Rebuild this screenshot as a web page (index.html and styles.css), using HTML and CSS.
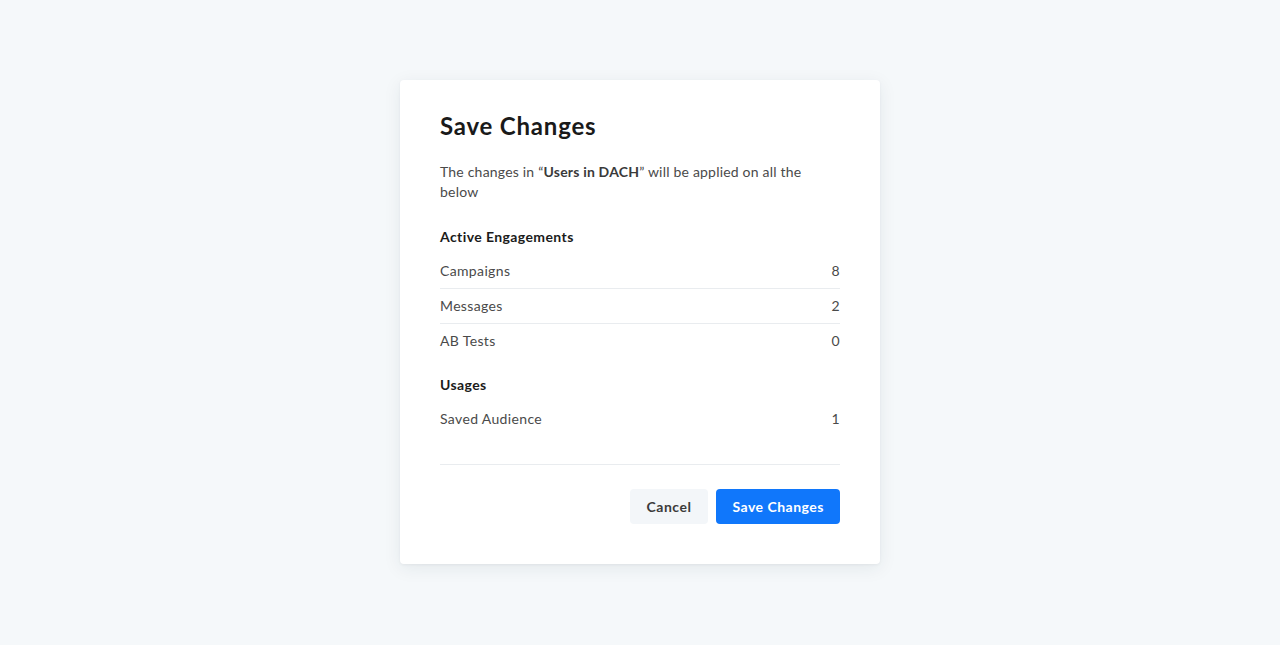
FILE: index.html
```html
<!DOCTYPE html>
<html lang="en">
<head>
<meta charset="utf-8">
<title>Save Changes</title>
<link rel="stylesheet" href="styles.css">
</head>
<body>
<div class="page">
  <div class="modal" role="dialog" aria-labelledby="modal-title">
    <h1 class="modal-title" id="modal-title">Save Changes</h1>
    <p class="modal-desc">The changes in “<strong>Users in DACH</strong>” will be applied on all the below</p>

    <section class="group group-first">
      <h2 class="group-title">Active Engagements</h2>
      <ul class="rows">
        <li class="row"><span>Campaigns</span><span>8</span></li>
        <li class="row"><span>Messages</span><span>2</span></li>
        <li class="row"><span>AB Tests</span><span>0</span></li>
      </ul>
    </section>

    <section class="group">
      <h2 class="group-title">Usages</h2>
      <ul class="rows">
        <li class="row"><span>Saved Audience</span><span>1</span></li>
      </ul>
    </section>

    <div class="modal-footer">
      <button class="btn btn-secondary" type="button">Cancel</button>
      <button class="btn btn-primary" type="button">Save Changes</button>
    </div>
  </div>
</div>
</body>
</html>
```

FILE: styles.css
```css
* { box-sizing: border-box; }

html, body {
  margin: 0;
  padding: 0;
}

body {
  background: #f5f8fa;
  font-family: Lato, "Noto Sans", "Liberation Sans", sans-serif;
  color: #4a4a4a;
  -webkit-font-smoothing: antialiased;
}

.page {
  min-height: 644px;
  display: flex;
  align-items: center;
  justify-content: center;
}

.modal {
  width: 480px;
  background: #ffffff;
  border-radius: 4px;
  box-shadow: 0 4px 18px rgba(30, 45, 60, 0.08), 0 1px 3px rgba(30, 45, 60, 0.05);
  padding: 32px 40px 40px;
}

.modal-title {
  margin: 0;
  font-size: 24px;
  line-height: 28px;
  font-weight: 700;
  letter-spacing: 0.8px;
  color: #1a1a1a;
}

.modal-desc {
  margin: 22px 0 0;
  font-size: 14px;
  line-height: 20px;
  letter-spacing: 0.2px;
  color: #4a4a4a;
}

.modal-desc strong {
  font-weight: 700;
  color: #3a3a3a;
}

.group { margin-top: 17px; }
.group-first { margin-top: 25px; }

.group-title {
  margin: 0 0 7px;
  font-size: 14px;
  line-height: 20px;
  font-weight: 700;
  letter-spacing: 0.4px;
  color: #1b1b1b;
}

.rows {
  list-style: none;
  margin: 0;
  padding: 0;
}

.row {
  display: flex;
  justify-content: space-between;
  padding: 7px 0;
  font-size: 14px;
  line-height: 20px;
  letter-spacing: 0.35px;
  color: #4a4a4a;
  border-bottom: 1px solid #e9ecef;
}

.row:last-child { border-bottom: none; }

.modal-footer {
  margin-top: 28px;
  border-top: 1px solid #e9ecef;
  padding-top: 24px;
  display: flex;
  justify-content: flex-end;
  gap: 8px;
}

.btn {
  height: 35px;
  border: none;
  border-radius: 4px;
  padding: 0 16px;
  font-family: inherit;
  font-size: 14px;
  font-weight: 700;
  letter-spacing: 0.5px;
  cursor: pointer;
}

.btn-secondary {
  padding: 0 17px;
  background: #f3f6f9;
  color: #3b3b3b;
}

.btn-primary {
  background: #1077fb;
  color: #ffffff;
}
```
